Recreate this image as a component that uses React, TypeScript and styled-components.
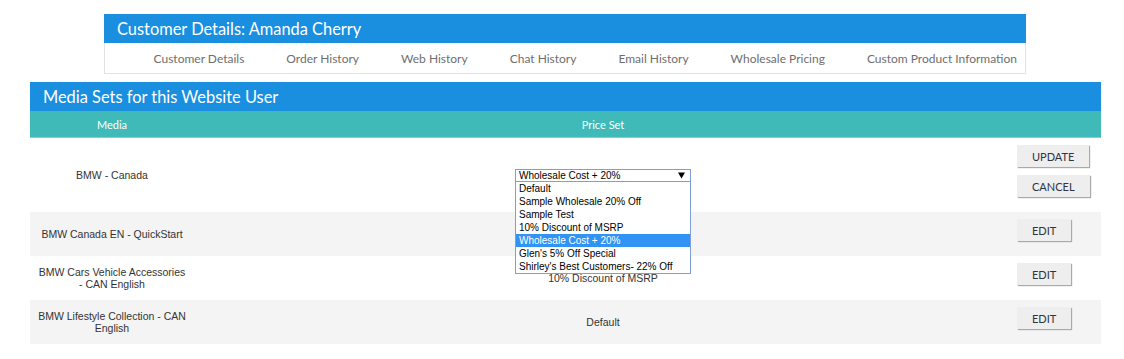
import React from 'react';
import styled, { createGlobalStyle } from 'styled-components';

const GlobalStyle = createGlobalStyle`
  *, *::before, *::after { box-sizing: border-box; }
  html, body { margin: 0; padding: 0; background: #fff; }
  body { font-family: "Liberation Sans", Arial, sans-serif; }
`;

const Page = styled.div`
  width: 1124px;
  padding-top: 14px;
  display: flex;
  flex-direction: column;
`;

const CustomerPanel = styled.section`
  margin-left: 104px;
  width: 922px;
`;

const PanelTitle = styled.h1`
  margin: 0;
  height: 29px;
  padding-left: 13px;
  background: #1a8fe0;
  color: #fff;
  font-family: Lato, "Open Sans", sans-serif;
  font-weight: 400;
  font-size: 16.4px;
  line-height: 29px;
`;

const Nav = styled.nav`
  display: flex;
  justify-content: flex-end;
  align-items: center;
  gap: 42px;
  height: 31px;
  padding-right: 8px;
  border: 1px solid #e2e2e2;
  border-top: none;
`;

const NavLink = styled.a`
  font-family: Lato, "Open Sans", sans-serif;
  font-size: 12px;
  color: #6e6e6e;
  text-decoration: none;
  cursor: pointer;
`;

const MediaPanel = styled.section`
  margin: 8px 0 0 30px;
  width: 1071px;
`;

const columns = '164px 818px 1fr';

const TableHead = styled.div`
  display: grid;
  grid-template-columns: ${columns};
  align-items: center;
  height: 27px;
  background: #3fbab8;
  border-bottom: 1px solid #b9b9b9;
`;

const HeadCell = styled.div`
  text-align: center;
  color: #fff;
  font-family: Lato, "Open Sans", sans-serif;
  font-size: 11px;
`;

const Row = styled.div<{ $shade: boolean }>`
  display: grid;
  grid-template-columns: ${columns};
  align-items: center;
  background: ${(p) => (p.$shade ? '#f4f4f4' : '#fff')};
`;

const MediaCell = styled.div`
  padding: 0 6.5px;
  text-align: center;
  font-size: 10.5px;
  line-height: 12px;
  color: #333;
`;

const PriceCell = styled.div`
  display: flex;
  justify-content: center;
  font-size: 10.5px;
  line-height: 12px;
  color: #333;
`;

const ActionCell = styled.div`
  display: flex;
  flex-direction: column;
  align-items: flex-start;
  gap: 8px;
  padding: 7px 0 15px 5px;
  align-self: stretch;
`;

const Button = styled.button`
  height: 22px;
  padding: 0 15px;
  border: none;
  background: #eeeeee;
  box-shadow: 1px 1px 1px #a9a9a9;
  font-family: Lato, "Open Sans", sans-serif;
  font-size: 11px;
  color: #2e3540;
  text-transform: uppercase;
  cursor: pointer;
`;

const SelectBox = styled.div`
  position: relative;
  width: 176px;
  height: 13px;
  padding-left: 3px;
  border: 1px solid #7f9ed6;
  background: #fff;
  text-align: left;
  font-size: 10px;
  line-height: 11px;
  color: #000;
`;

const Arrow = styled.svg`
  position: absolute;
  right: 5px;
  top: 2px;
`;

const OptionList = styled.div`
  position: absolute;
  left: -1px;
  top: 100%;
  width: 176px;
  border: 1px solid #7f9ed6;
  background: #fff;
  z-index: 2;
`;

const Option = styled.div<{ $active: boolean }>`
  height: 13px;
  padding-left: 3px;
  font-size: 10px;
  line-height: 13px;
  white-space: nowrap;
  color: ${(p) => (p.$active ? '#fff' : '#000')};
  background: ${(p) => (p.$active ? '#3193f3' : 'transparent')};
`;

const navItems = [
  'Customer Details',
  'Order History',
  'Web History',
  'Chat History',
  'Email History',
  'Wholesale Pricing',
  'Custom Product Information',
];

const priceSets = [
  'Default',
  'Sample Wholesale 20% Off',
  'Sample Test',
  '10% Discount of MSRP',
  'Wholesale Cost + 20%',
  "Glen's 5% Off Special",
  "Shirley's Best Customers- 22% Off",
];

type MediaRow = { media: string; price: string; editing?: boolean };

const rows: MediaRow[] = [
  { media: 'BMW - Canada', price: 'Wholesale Cost + 20%', editing: true },
  { media: 'BMW Canada EN - QuickStart', price: '' },
  { media: 'BMW Cars Vehicle Accessories - CAN English', price: '10% Discount of MSRP' },
  { media: 'BMW Lifestyle Collection - CAN English', price: 'Default' },
];

function PriceSelect({ value }: { value: string }) {
  return (
    <SelectBox>
      {value}
      <Arrow width="7" height="7" viewBox="0 0 7 7">
        <path d="M0 0.5 H7 L3.5 6.5 Z" fill="#000" />
      </Arrow>
      <OptionList>
        {priceSets.map((p) => (
          <Option key={p} $active={p === value}>
            {p}
          </Option>
        ))}
      </OptionList>
    </SelectBox>
  );
}

export default function App() {
  return (
    <>
      <GlobalStyle />
      <Page>
        <CustomerPanel>
          <PanelTitle>Customer Details: Amanda Cherry</PanelTitle>
          <Nav>
            {navItems.map((n) => (
              <NavLink key={n}>{n}</NavLink>
            ))}
          </Nav>
        </CustomerPanel>
        <MediaPanel>
          <PanelTitle>Media Sets for this Website User</PanelTitle>
          <TableHead>
            <HeadCell>Media</HeadCell>
            <HeadCell>Price Set</HeadCell>
            <HeadCell />
          </TableHead>
          {rows.map((r, i) => (
            <Row key={r.media} $shade={i % 2 === 1}>
              <MediaCell>{r.media}</MediaCell>
              <PriceCell>{r.editing ? <PriceSelect value={r.price} /> : r.price}</PriceCell>
              <ActionCell>
                {r.editing ? (
                  <>
                    <Button>Update</Button>
                    <Button>Cancel</Button>
                  </>
                ) : (
                  <Button>Edit</Button>
                )}
              </ActionCell>
            </Row>
          ))}
        </MediaPanel>
      </Page>
    </>
  );
}
